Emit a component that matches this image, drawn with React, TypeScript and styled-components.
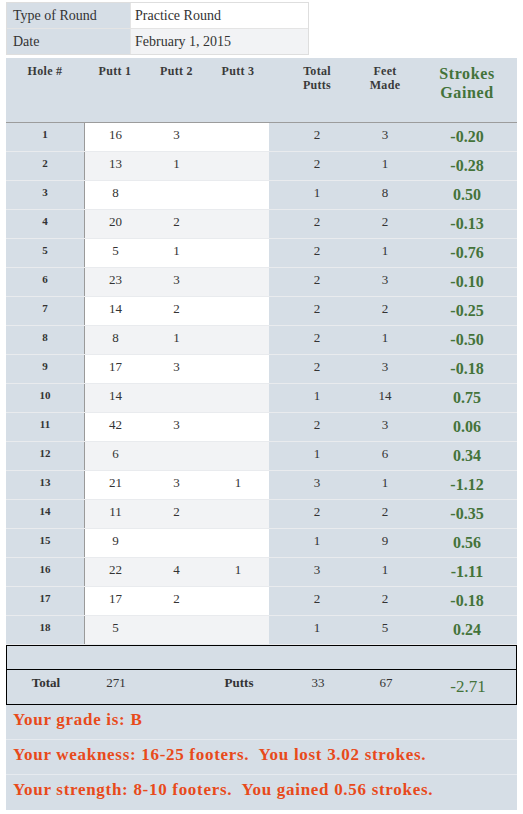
import React from 'react'
import styled, { createGlobalStyle } from 'styled-components'

const GlobalStyle = createGlobalStyle`
  body {
    margin: 0;
    background: #fff;
    color: #333;
  }
  body, div {
    font-family: 'Liberation Serif', 'DejaVu Serif', serif;
  }
`

const HEAD_BG = '#d6dee6'
const GREEN = '#44733a'
const ORANGE = '#e84a1b'
const COLS = '78px 62px 61px 62px 96px 40px 112px'

const Page = styled.div`
  width: 511px;
  padding: 2px 6px 4px 6px;
`

const InfoTable = styled.div`
  width: 301px;
  display: grid;
  grid-template-columns: 123px 178px;
  border: 1px solid #dedede;
  margin-bottom: 3px;
`

const InfoLabel = styled.div<{ $last?: boolean }>`
  background: ${HEAD_BG};
  font-size: 14px;
  padding-left: 6px;
  height: 25px;
  line-height: 25px;
  border-bottom: ${(p) => (p.$last ? 'none' : '1px solid #e4e4e4')};
`

const InfoValue = styled(InfoLabel)<{ $alt?: boolean }>`
  padding-left: 4px;
  background: ${(p) => (p.$alt ? '#f2f3f5' : '#fff')};
  border-left: 1px solid #e4e4e4;
`

const HeaderRow = styled.div`
  display: grid;
  grid-template-columns: ${COLS};
  height: 64px;
  background: ${HEAD_BG};
  border-bottom: 1px solid #9c9c9c;
`

const HeadCell = styled.div<{ $big?: boolean; $shift?: number }>`
  padding-top: ${(p) => (p.$big ? '6px' : '6px')};
  padding-left: ${(p) => p.$shift || 0}px;
  text-align: center;
  font-weight: bold;
  font-size: ${(p) => (p.$big ? '16px' : '12px')};
  letter-spacing: ${(p) => (p.$big ? '0.6px' : '0.3px')};
  line-height: ${(p) => (p.$big ? '19px' : '14px')};
  color: ${(p) => (p.$big ? GREEN : '#3a3a3a')};
`

const Row = styled.div`
  display: grid;
  grid-template-columns: ${COLS};
  height: 28px;
  background: ${HEAD_BG};
  border-bottom: 1px solid #e9ebee;
`

const Cell = styled.div<{ $kind: 'hole' | 'putt' | 'num' | 'sg'; $alt?: boolean; $first?: boolean }>`
  display: flex;
  align-items: center;
  justify-content: center;
  padding-left: ${(p) => (p.$kind === 'sg' ? '12px' : '0')};
  padding-bottom: ${(p) => (p.$kind === 'sg' ? '0' : p.$kind === 'hole' ? '6px' : '4px')};
  background: ${(p) => (p.$kind === 'putt' ? (p.$alt ? '#f2f3f5' : '#fff') : 'transparent')};
  border-left: ${(p) => (p.$first ? '1px solid #9a9a9a' : 'none')};
  font-size: ${(p) => (p.$kind === 'hole' ? '11px' : p.$kind === 'sg' ? '16px' : '13px')};
  font-weight: ${(p) => (p.$kind === 'hole' || p.$kind === 'sg' ? 'bold' : 'normal')};
  color: ${(p) => (p.$kind === 'sg' ? GREEN : '#333')};
`

const TotalsBox = styled.div`
  border: 1px solid #000;
  background: ${HEAD_BG};
`

const Spacer = styled.div`
  height: 23px;
  border-bottom: 1px solid #000;
`

const TotalRow = styled.div`
  display: grid;
  grid-template-columns: ${COLS};
  height: 34px;
`

const TotalCell = styled.div<{ $bold?: boolean; $sg?: boolean }>`
  text-align: center;
  padding-top: ${(p) => (p.$sg ? '7px' : '5px')};
  padding-left: ${(p) => (p.$sg ? '12px' : '0')};
  font-size: ${(p) => (p.$sg ? '17px' : '13px')};
  font-weight: ${(p) => (p.$bold ? 'bold' : 'normal')};
  color: ${(p) => (p.$sg ? GREEN : '#333')};
`

const Summary = styled.div`
  background: ${HEAD_BG};
`

const SummaryLine = styled.div<{ $last?: boolean }>`
  height: 35px;
  padding: 5px 0 0 7px;
  box-sizing: border-box;
  font-size: 17px;
  letter-spacing: 0.7px;
  font-weight: bold;
  color: ${ORANGE};
  white-space: pre;
  line-height: 20px;
  border-bottom: ${(p) => (p.$last ? 'none' : '1px solid #e6eaef')};
`

type Hole = [number, string, string, string, number, number, string]

const holes: Hole[] = [
  [1, '16', '3', '', 2, 3, '-0.20'],
  [2, '13', '1', '', 2, 1, '-0.28'],
  [3, '8', '', '', 1, 8, '0.50'],
  [4, '20', '2', '', 2, 2, '-0.13'],
  [5, '5', '1', '', 2, 1, '-0.76'],
  [6, '23', '3', '', 2, 3, '-0.10'],
  [7, '14', '2', '', 2, 2, '-0.25'],
  [8, '8', '1', '', 2, 1, '-0.50'],
  [9, '17', '3', '', 2, 3, '-0.18'],
  [10, '14', '', '', 1, 14, '0.75'],
  [11, '42', '3', '', 2, 3, '0.06'],
  [12, '6', '', '', 1, 6, '0.34'],
  [13, '21', '3', '1', 3, 1, '-1.12'],
  [14, '11', '2', '', 2, 2, '-0.35'],
  [15, '9', '', '', 1, 9, '0.56'],
  [16, '22', '4', '1', 3, 1, '-1.11'],
  [17, '17', '2', '', 2, 2, '-0.18'],
  [18, '5', '', '', 1, 5, '0.24'],
]

const App: React.FC = () => {
  return (
    <>
      <GlobalStyle />
      <Page>
        <InfoTable>
          <InfoLabel>Type of Round</InfoLabel>
          <InfoValue>Practice Round</InfoValue>
          <InfoLabel $last>Date</InfoLabel>
          <InfoValue $last $alt>February 1, 2015</InfoValue>
        </InfoTable>

        <HeaderRow>
          <HeadCell>Hole #</HeadCell>
          <HeadCell>Putt 1</HeadCell>
          <HeadCell>Putt 2</HeadCell>
          <HeadCell>Putt 3</HeadCell>
          <HeadCell>Total<br />Putts</HeadCell>
          <HeadCell>Feet<br />Made</HeadCell>
          <HeadCell $big $shift={12}>Strokes<br />Gained</HeadCell>
        </HeaderRow>

        {holes.map(([n, p1, p2, p3, total, feet, sg]) => {
          const alt = n % 2 === 0
          return (
            <Row key={n}>
              <Cell $kind="hole">{n}</Cell>
              <Cell $kind="putt" $alt={alt} $first>{p1}</Cell>
              <Cell $kind="putt" $alt={alt}>{p2}</Cell>
              <Cell $kind="putt" $alt={alt}>{p3}</Cell>
              <Cell $kind="num">{total}</Cell>
              <Cell $kind="num">{feet}</Cell>
              <Cell $kind="sg">{sg}</Cell>
            </Row>
          )
        })}

        <TotalsBox>
          <Spacer />
          <TotalRow>
            <TotalCell $bold>Total</TotalCell>
            <TotalCell>271</TotalCell>
            <TotalCell />
            <TotalCell $bold>Putts</TotalCell>
            <TotalCell>33</TotalCell>
            <TotalCell>67</TotalCell>
            <TotalCell $sg>-2.71</TotalCell>
          </TotalRow>
        </TotalsBox>

        <Summary>
          <SummaryLine>Your grade is: B</SummaryLine>
          <SummaryLine>Your weakness: 16-25 footers.  You lost 3.02 strokes.</SummaryLine>
          <SummaryLine $last>Your strength: 8-10 footers.  You gained 0.56 strokes.</SummaryLine>
        </Summary>
      </Page>
    </>
  )
}

export default App
